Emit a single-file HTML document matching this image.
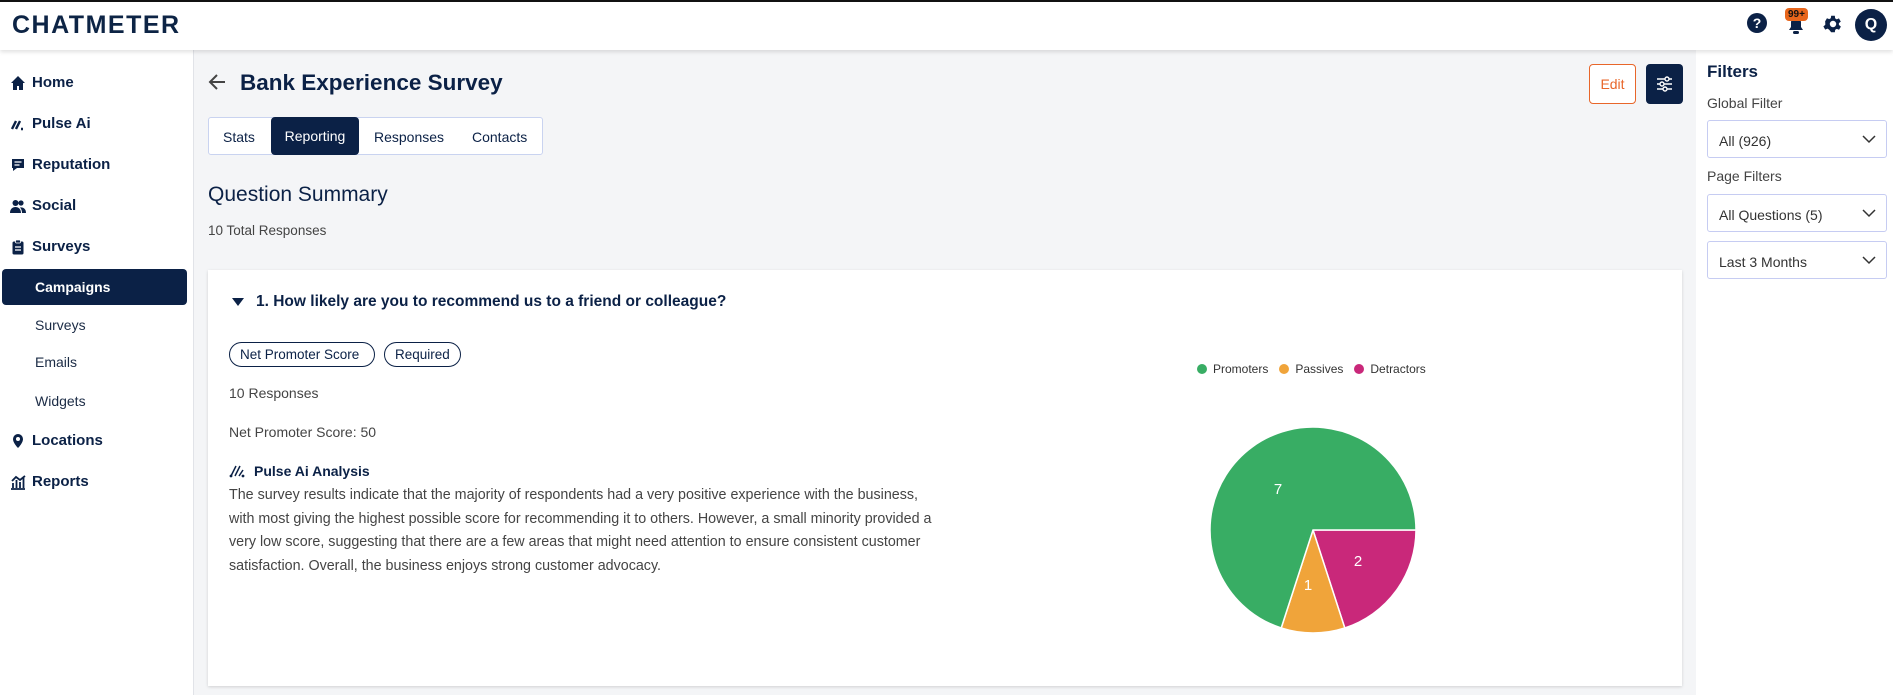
<!DOCTYPE html>
<html><head><meta charset="utf-8">
<style>
*{box-sizing:border-box;margin:0;padding:0}
body{width:1893px;height:695px;overflow:hidden;background:#f4f5f7;font-family:"Liberation Sans",sans-serif;color:#0b2146;position:relative}
.hdr{position:absolute;left:0;top:0;width:1893px;height:50px;background:#fff;border-top:2px solid #111;box-shadow:0 2px 4px rgba(0,0,0,.12);z-index:5}
.logo{position:absolute;left:12px;top:9px;font-size:25px;font-weight:bold;letter-spacing:1.5px;color:#0d2445}
.side{position:absolute;left:0;top:50px;width:194px;height:645px;background:#fff;border-right:1px solid #e1e3e8}
.nav{position:absolute;left:10px;font-size:15px;font-weight:bold;color:#0b2146;display:flex;align-items:center;gap:6px}
.nav svg{width:16px;height:16px}
.sub{position:absolute;left:35px;font-size:14px;color:#1b2b45}
.camp{position:absolute;left:2px;top:219px;width:185px;height:36px;background:#0b2146;border-radius:4px;color:#fff;font-size:14px;font-weight:bold;padding:10px 0 0 33px}
.title{position:absolute;left:240px;top:70px;font-size:22.5px;font-weight:bold;color:#0b2146}
.tabs{position:absolute;left:208px;top:117px;width:335px;height:38px;border:1px solid #c9d3f0;border-radius:3px;background:#fff;font-size:14px}
.tabs span{position:absolute;top:11px}
.tabs .act{top:-1px;left:62px;width:88px;height:38px;background:#0b2146;color:#fff;border-radius:4px;text-align:center;padding-top:11px}
.card{position:absolute;left:208px;top:270px;width:1474px;height:416px;background:#fff;box-shadow:0 1px 3px rgba(0,0,0,.15)}
.chip{position:absolute;top:342px;height:25px;border:1.5px solid #0b2146;border-radius:13px;font-size:13.5px;padding:4px 10px 0;color:#0b2146}
.g{color:#444;font-size:14px;position:absolute}
.para{position:absolute;left:229px;top:484px;width:710px;font-size:14.3px;line-height:23.7px;color:#444}
.rp{position:absolute;left:1696px;top:50px;width:197px;height:645px;background:#fff}
.sel{position:absolute;left:1707px;width:180px;height:38px;border:1px solid #c6ccf2;border-radius:3px;font-size:14px;color:#333;padding:12px 0 0 11px}
.sel svg{position:absolute;right:10px;top:14px}
.lbl{position:absolute;left:1707px;font-size:14px;color:#444}
</style></head><body>
<div class="hdr"><div class="logo">CHATMETER</div>
<svg style="position:absolute;left:1746px;top:10px" width="22" height="22" viewBox="0 0 22 22"><circle cx="11" cy="11" r="10" fill="#0b2146"/><text x="11" y="16" font-size="14" font-weight="bold" fill="#fff" text-anchor="middle" font-family="Liberation Sans">?</text></svg>
<svg style="position:absolute;left:1785px;top:11px" width="22" height="22" viewBox="0 0 22 22"><path d="M4 17h14l-2-3v-5a5 5 0 0 0-10 0v5z" fill="#0b2146"/><rect x="8" y="18" width="6" height="3" rx="1.5" fill="#0b2146"/></svg>
<div style="position:absolute;left:1785px;top:6px;background:#e8661c;color:#111;font-size:10px;font-weight:bold;border-radius:4px;padding:1px 3px">99+</div>
<svg style="position:absolute;left:1822px;top:11px" width="22" height="22" viewBox="0 0 24 24"><path fill="#0b2146" d="M19.4 13a7.6 7.6 0 0 0 0-2l2.1-1.6-2-3.5-2.5 1a7 7 0 0 0-1.7-1L15 3h-4l-.4 2.7a7 7 0 0 0-1.7 1l-2.5-1-2 3.5L4.6 11a7.6 7.6 0 0 0 0 2l-2.1 1.6 2 3.5 2.5-1a7 7 0 0 0 1.7 1L11 21h4l.4-2.7a7 7 0 0 0 1.7-1l2.5 1 2-3.5zM13 15.5a3.5 3.5 0 1 1 0-7 3.5 3.5 0 0 1 0 7z" transform="translate(-1 0)"/></svg>
<div style="position:absolute;left:1855px;top:7px;width:32px;height:32px;border-radius:50%;background:#0b2146;color:#fff;font-weight:bold;font-size:16px;text-align:center;line-height:32px">Q</div>
</div>

<div class="side">
<div class="nav" style="top:24px"><svg viewBox="0 0 16 16"><path d="M8 1L1 8h2v7h4v-4h2v4h4V8h2z" fill="#0b2146"/></svg>Home</div>
<div class="nav" style="top:65px"><svg viewBox="0 0 16 16"><path d="M2 13l4-8M6 13l4-8M11 13h2" stroke="#0b2146" stroke-width="2.4" fill="none"/></svg>Pulse Ai</div>
<div class="nav" style="top:106px"><svg viewBox="0 0 16 16"><path d="M2 2h12v9H7l-4 3v-3H2z" fill="#0b2146"/><path d="M4.5 5h7M4.5 8h5" stroke="#fff" stroke-width="1.3"/></svg>Reputation</div>
<div class="nav" style="top:147px"><svg viewBox="0 0 16 16"><circle cx="5.5" cy="5" r="3" fill="#0b2146"/><circle cx="11" cy="5" r="2.6" fill="#0b2146"/><path d="M0 15c0-4 2.5-6 5.5-6s5.5 2 5.5 6zM12 15c0-2-.5-4-2-5.5 3.5-.5 6 1.5 6 5.5z" fill="#0b2146"/></svg>Social</div>
<div class="nav" style="top:188px"><svg viewBox="0 0 16 16"><rect x="2.5" y="2.5" width="11" height="13" rx="1.5" fill="#0b2146"/><rect x="5.5" y="1" width="5" height="3" rx="1" fill="#0b2146" stroke="#fff" stroke-width=".8"/><path d="M5 8h6M5 11h6" stroke="#fff" stroke-width="1.2"/></svg>Surveys</div>
<div class="camp">Campaigns</div>
<div class="sub" style="top:267px">Surveys</div>
<div class="sub" style="top:304px">Emails</div>
<div class="sub" style="top:343px">Widgets</div>
<div class="nav" style="top:382px"><svg viewBox="0 0 16 16"><path d="M8 1a5 5 0 0 0-5 5c0 4 5 9 5 9s5-5 5-9a5 5 0 0 0-5-5z" fill="#0b2146"/><circle cx="8" cy="6" r="2" fill="#fff"/></svg>Locations</div>
<div class="nav" style="top:423px"><svg viewBox="0 0 16 16"><path d="M1 15h14M3 14V9M6.5 14V6M10 14V8M13.5 14V4M2 7l4-4 4 3 5-4" stroke="#0b2146" stroke-width="1.8" fill="none"/></svg>Reports</div>
</div>

<svg style="position:absolute;left:207px;top:73px" width="20" height="18" viewBox="0 0 20 18"><path d="M18 9H3M10 2L3 9l7 7" stroke="#444" stroke-width="2" fill="none"/></svg>
<div class="title">Bank Experience Survey</div>
<div class="tabs"><span style="left:14px">Stats</span><span class="act">Reporting</span><span style="left:165px">Responses</span><span style="left:263px">Contacts</span></div>
<div style="position:absolute;left:208px;top:183px;font-size:21px;color:#0b2146">Question Summary</div>
<div class="g" style="left:208px;top:223px;font-size:13.5px">10 Total Responses</div>

<div style="position:absolute;left:1589px;top:64px;width:47px;height:40px;border:1px solid #e8662a;border-radius:4px;background:#fff;color:#e8662a;font-size:14px;text-align:center;line-height:38px">Edit</div>
<div style="position:absolute;left:1646px;top:64px;width:37px;height:40px;background:#0b2146;border-radius:4px"><svg style="position:absolute;left:10px;top:12px" width="17" height="16" viewBox="0 0 17 16"><path d="M1 3h15M1 8h15M1 13h15" stroke="#fff" stroke-width="1.6"/><circle cx="11" cy="3" r="2" fill="#0b2146" stroke="#fff" stroke-width="1.4"/><circle cx="6" cy="8" r="2" fill="#0b2146" stroke="#fff" stroke-width="1.4"/><circle cx="9" cy="13" r="2" fill="#0b2146" stroke="#fff" stroke-width="1.4"/></svg></div>

<div class="card"></div>
<svg style="position:absolute;left:231px;top:297px" width="14" height="10"><path d="M1 1h12L7 9z" fill="#0b2146"/></svg>
<div style="position:absolute;left:256px;top:293px;font-size:15.5px;font-weight:bold;color:#0b2146">1. How likely are you to recommend us to a friend or colleague?</div>
<div class="chip" style="left:229px;width:146px">Net Promoter Score</div>
<div class="chip" style="left:384px;width:77px">Required</div>
<div class="g" style="left:229px;top:385px">10 Responses</div>
<div class="g" style="left:229px;top:424px">Net Promoter Score: 50</div>
<svg style="position:absolute;left:229px;top:464px" width="16" height="14" viewBox="0 0 16 14"><path d="M2 12l5-10M6 12l5-10M10 12l4-6" stroke="#0b2146" stroke-width="1.5" fill="none"/><circle cx="2" cy="12" r="1.4" fill="#0b2146"/><circle cx="14" cy="12" r="1.4" fill="#0b2146"/></svg>
<div style="position:absolute;left:254px;top:463px;font-size:14px;font-weight:bold;color:#0b2146">Pulse Ai Analysis</div>
<div class="para">The survey results indicate that the majority of respondents had a very positive experience with the business, with most giving the highest possible score for recommending it to others. However, a small minority provided a very low score, suggesting that there are a few areas that might need attention to ensure consistent customer satisfaction. Overall, the business enjoys strong customer advocacy.</div>

<div style="position:absolute;left:1197px;top:362px;font-size:12px;color:#333;display:flex;gap:6px;align-items:center">
<span style="width:10px;height:10px;border-radius:50%;background:#38ad64;display:inline-block"></span>Promoters
<span style="width:10px;height:10px;border-radius:50%;background:#f0a43a;display:inline-block;margin-left:5px"></span>Passives
<span style="width:10px;height:10px;border-radius:50%;background:#c9287a;display:inline-block;margin-left:5px"></span>Detractors</div>
<svg style="position:absolute;left:1203px;top:420px" width="220" height="220" viewBox="-110 -110 220 220">
<path d="M0 0L103 0A103 103 0 0 1 31.8 98Z" fill="#c9287a" stroke="#fff" stroke-width="1.5"/>
<path d="M0 0L31.8 98A103 103 0 0 1 -31.8 98Z" fill="#f0a43a" stroke="#fff" stroke-width="1.5"/>
<path d="M0 0L-31.8 98A103 103 0 1 1 103 0Z" fill="#38ad64" stroke="#fff" stroke-width="1.5"/>
<text x="-35" y="-36" fill="#fff" font-size="15" font-family="Liberation Sans" text-anchor="middle">7</text>
<text x="-5" y="60" fill="#fff" font-size="15" font-family="Liberation Sans" text-anchor="middle">1</text>
<text x="45" y="36" fill="#fff" font-size="15" font-family="Liberation Sans" text-anchor="middle">2</text>
</svg>

<div class="rp"></div>
<div style="position:absolute;left:1707px;top:62px;font-size:17px;font-weight:bold;color:#0b2146">Filters</div>
<div class="lbl" style="top:95px">Global Filter</div>
<div class="sel" style="top:120px">All (926)<svg width="14" height="9"><path d="M1 1l6 6 6-6" stroke="#333" stroke-width="1.5" fill="none"/></svg></div>
<div class="lbl" style="top:168px">Page Filters</div>
<div class="sel" style="top:194px">All Questions (5)<svg width="14" height="9"><path d="M1 1l6 6 6-6" stroke="#333" stroke-width="1.5" fill="none"/></svg></div>
<div class="sel" style="top:241px">Last 3 Months<svg width="14" height="9"><path d="M1 1l6 6 6-6" stroke="#333" stroke-width="1.5" fill="none"/></svg></div>
</body></html>
